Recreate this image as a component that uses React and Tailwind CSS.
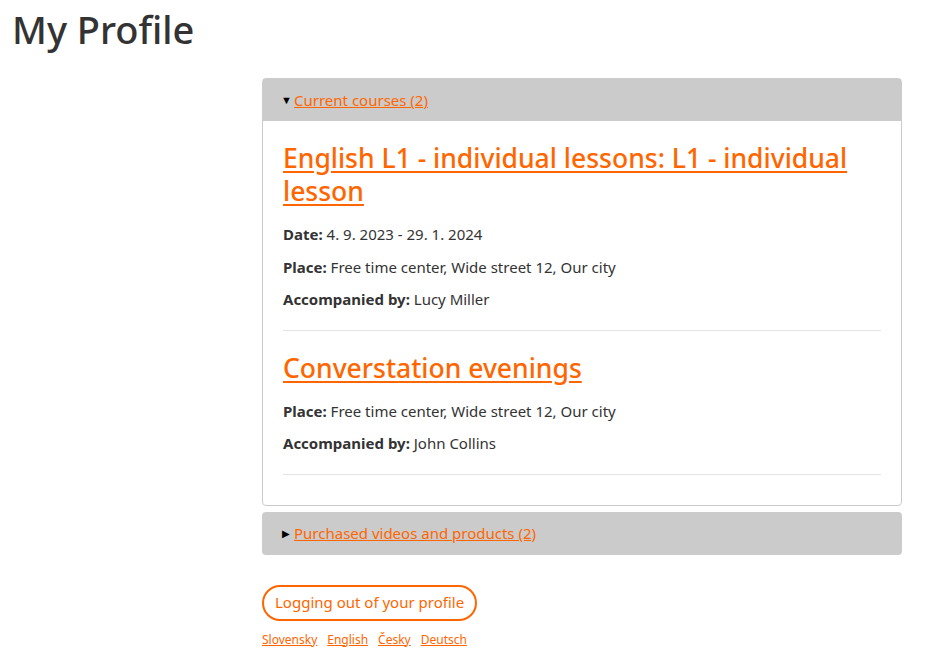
import React from "react";

const courses = [
    {
        title: "English L1 - individual lessons: L1 - individual lesson",
        rows: [
            { label: "Date:", value: "4. 9. 2023 - 29. 1. 2024" },
            { label: "Place:", value: "Free time center, Wide street 12, Our city" },
            { label: "Accompanied by:", value: "Lucy Miller" },
        ],
    },
    {
        title: "Converstation evenings",
        rows: [
            { label: "Place:", value: "Free time center, Wide street 12, Our city" },
            { label: "Accompanied by:", value: "John Collins" },
        ],
    },
];

const languages = ["Slovensky", "English", "Česky", "Deutsch"];

const App = () => {
    return (
        <div
            className="min-h-screen bg-white text-[#333]"
            style={{ fontFamily: '"Noto Sans", "Open Sans", sans-serif' }}
        >
            <h1 className="px-3 pt-[4px] text-[38px] leading-[50px] font-medium text-[#333]">
                My Profile
            </h1>

            <div className="ml-[262px] w-[640px] mt-[24px]">
                {/* Current courses */}
                <details open className="border border-[#cbcbcb] rounded-[4px]">
                    <summary className="bg-[#cbcbcb] h-[42px] pl-[18px] flex items-center text-[15px] cursor-pointer list-none">
                        <span className="w-[13px] text-[11px] text-black">▼</span>
                        <a href="#" className="text-[#ff6600] underline">
                            Current courses (2)
                        </a>
                    </summary>
                    <div className="px-5 pt-[21px] pb-[30px]">
                        {courses.map((course, i) => (
                            <div
                                key={course.title}
                                className={`border-b border-[#e4e4e4] ${i > 0 ? "pt-[21px] pb-[8px]" : "pb-[8px]"}`}
                            >
                                <h2 className="text-[26.5px] leading-[33px] font-medium mb-[16px]">
                                    <a href="#" className="text-[#ff6600] underline underline-offset-[3px]">
                                        {course.title}
                                    </a>
                                </h2>
                                {course.rows.map((row) => (
                                    <p key={row.label} className="text-[15px] leading-[20px] mb-[12.5px]">
                                        <b className="font-bold">{row.label}</b> {row.value}
                                    </p>
                                ))}
                            </div>
                        ))}
                    </div>
                </details>

                {/* Purchased videos */}
                <details className="mt-[6px] rounded-[4px] bg-[#cbcbcb]">
                    <summary className="h-[43px] pl-[20px] flex items-center text-[15px] cursor-pointer list-none">
                        <span className="w-[12px] text-[10px] text-black">▶</span>
                        <a href="#" className="text-[#ff6600] underline">
                            Purchased videos and products (2)
                        </a>
                    </summary>
                </details>

                <button className="mt-[30px] h-[36px] px-[11px] rounded-full border-2 border-[#ff6600] text-[#ff6600] text-[15px] bg-white">
                    Logging out of your profile
                </button>

                <div className="mt-[10px] flex gap-[10px] text-[12px]">
                    {languages.map((lang) => (
                        <a key={lang} href="#" className="text-[#ff6600] underline">
                            {lang}
                        </a>
                    ))}
                </div>
            </div>
        </div>
    );
};

export default App;
